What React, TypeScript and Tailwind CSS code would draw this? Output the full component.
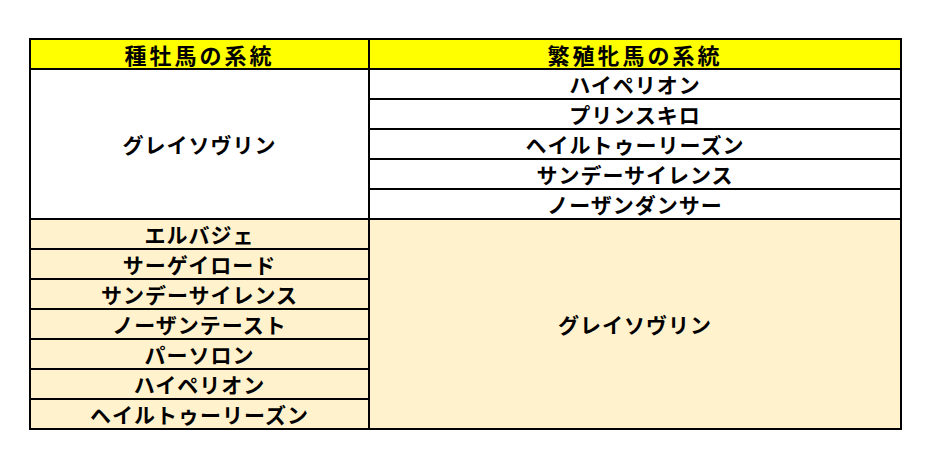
import React from "react";

const font = { fontFamily: '"Noto Sans CJK JP", "Noto Sans", sans-serif' };

const rightTop = ["ハイペリオン", "プリンスキロ", "ヘイルトゥーリーズン", "サンデーサイレンス", "ノーザンダンサー"];
const leftBottom = ["エルバジェ", "サーゲイロード", "サンデーサイレンス", "ノーザンテースト", "パーソロン", "ハイペリオン", "ヘイルトゥーリーズン"];

export default function App() {
  return (
    <div className="w-[927px] h-[455px] bg-white pt-[38px] pl-[29px]" style={font}>
      <div className="w-[873px] border-2 border-black text-black font-bold">
        <div className="flex h-[30px] bg-[#ffff00] border-b-2 border-black">
          <div className="w-[339px] border-r-2 border-black flex items-center justify-center text-[22px] tracking-[3px] leading-none">
            種牡馬の系統
          </div>
          <div className="flex-1 flex items-center justify-center text-[22px] tracking-[3px] leading-none">
            繁殖牝馬の系統
          </div>
        </div>
        <div className="flex h-[150px] bg-white">
          <div className="w-[339px] border-r-2 border-b-2 border-black flex items-center justify-center text-[21px] tracking-[1px] leading-none">
            グレイソヴリン
          </div>
          <div className="flex-1 flex flex-col">
            {rightTop.map((t) => (
              <div key={t} className="h-[30px] border-b-2 border-black flex items-center justify-center text-[21px] tracking-[1px] leading-none">
                {t}
              </div>
            ))}
          </div>
        </div>
        <div className="flex bg-[#fff2cc]">
          <div className="w-[339px] border-r-2 border-black flex flex-col">
            {leftBottom.map((t, i) => (
              <div
                key={i}
                className={
                  i < leftBottom.length - 1
                    ? "h-[30px] border-b-2 border-black flex items-center justify-center text-[21px] tracking-[1px] leading-none"
                    : "h-[28px] flex items-center justify-center text-[21px] tracking-[1px] leading-none"
                }
              >
                {t}
              </div>
            ))}
          </div>
          <div className="flex-1 flex items-center justify-center text-[21px] tracking-[1px] leading-none">
            グレイソヴリン
          </div>
        </div>
      </div>
    </div>
  );
}
